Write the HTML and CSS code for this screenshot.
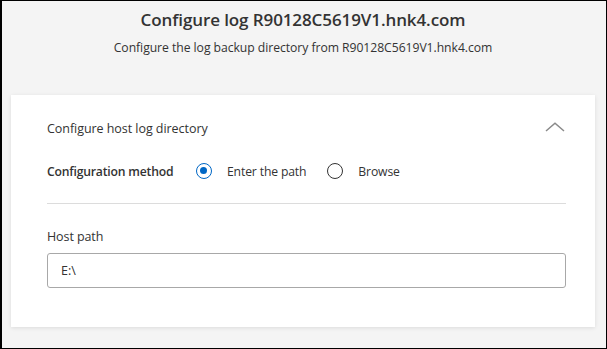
FILE: index.html
```html
<!DOCTYPE html>
<html>
<head>
<meta charset="utf-8">
<link rel="stylesheet" href="styles.css">
</head>
<body>
<div class="frame">
  <header class="head">
    <h1 class="title">Configure log R90128C5619V1.hnk4.com</h1>
    <p class="subtitle">Configure the log backup directory from R90128C5619V1.hnk4.com</p>
  </header>
  <section class="card">
    <div class="section-head">
      <span class="section-title">Configure host log directory</span>
      <svg class="chevron" width="20" height="10" viewBox="0 0 20 10"><path d="M1 9 L10 1.2 L19 9" fill="none" stroke="#8a8a8a" stroke-width="1.5"/></svg>
    </div>
    <div class="method-row">
      <span class="label-strong">Configuration method</span>
      <label class="radio">
        <span class="dot checked"></span>
        <span class="radio-text">Enter the path</span>
      </label>
      <label class="radio">
        <span class="dot"></span>
        <span class="radio-text">Browse</span>
      </label>
    </div>
    <div class="divider"></div>
    <div class="field">
      <div class="field-label">Host path</div>
      <div class="input">E:\</div>
    </div>
  </section>
</div>
</body>
</html>
```
FILE: styles.css
```css
* { box-sizing: border-box; }
html, body { margin: 0; padding: 0; }
body { font-family: "Open Sans", "Noto Sans", sans-serif; color: #333; }
.frame {
  width: 607px;
  height: 349px;
  border: 1px solid #000;
  border-left-width: 2px;
  background: #f4f4f4;
  padding: 0 11px 0 9px;
  overflow: hidden;
}
.head { text-align: center; padding-top: 7px; height: 94px; }
.title { margin: 0; font-size: 17px; line-height: 24px; font-weight: 600; color: #333; letter-spacing: -0.1px; }
.subtitle { margin: 7px 0 0; font-size: 12.2px; line-height: 18px; color: #333; letter-spacing: -0.05px; }
.card {
  background: #fff;
  height: 232px;
  box-shadow: 0 1px 4px rgba(0,0,0,0.10);
  padding: 0 29px 0 36px;
}
.section-head {
  height: 66px;
  display: flex;
  align-items: center;
  justify-content: space-between;
  padding-right: 1px;
}
.section-title { font-size: 12.5px; font-weight: 500; letter-spacing: -0.05px; }
.chevron { display: block; margin-bottom: 3px; }
.method-row {
  height: 20px;
  display: flex;
  align-items: center;
}
.label-strong { font-size: 12.2px; font-weight: 600; width: 149px; letter-spacing: -0.2px; }
.radio { display: flex; align-items: center; margin-right: 21px; }
.dot {
  width: 16px; height: 16px; border-radius: 50%;
  border: 1.5px solid #333; position: relative; margin-right: 15px;
}
.dot.checked { border-color: #0067c5; }
.dot.checked::after {
  content: ""; position: absolute; left: 3px; top: 3px;
  width: 7px; height: 7px; border-radius: 50%; background: #0067c5;
}
.radio-text { font-size: 12.2px; letter-spacing: -0.15px; }
.divider { height: 1px; background: #dcdcdc; margin-top: 22px; }
.field { padding-top: 24px; }
.field-label { font-size: 12.5px; line-height: 18px; letter-spacing: -0.1px; }
.input {
  margin-top: 7px;
  height: 35px;
  border: 1px solid #a8a8a8;
  border-radius: 3px;
  padding-left: 13px;
  display: flex; align-items: center;
  font-size: 12.5px;
}
```
